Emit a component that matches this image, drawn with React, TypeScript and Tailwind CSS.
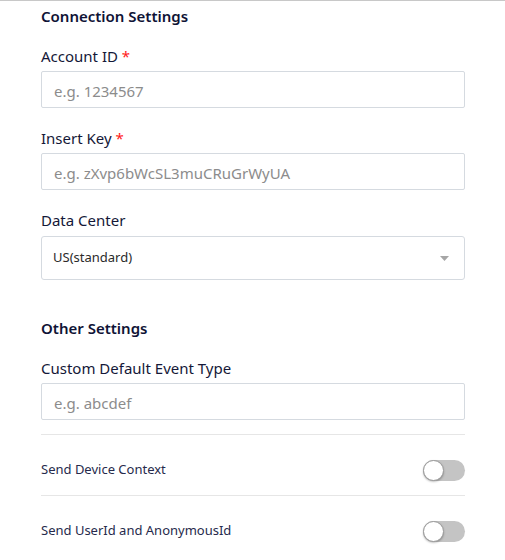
import React from "react";

function Label({ text, required }: { text: string; required?: boolean }) {
  return (
    <div className="text-[15px] leading-[22px] text-[#141838]">
      {text}
      {required && <span className="text-[#ff1a1a]"> *</span>}
    </div>
  );
}

function TextInput({ placeholder }: { placeholder: string }) {
  return (
    <input
      className="block w-full h-[37px] border border-[#d5dae0] rounded-[2px] px-[12px] pt-[2px] text-[15px] text-[#333] placeholder:text-[#8c8c8c] outline-none bg-white"
      style={{ fontFamily: "inherit" }}
      placeholder={placeholder}
    />
  );
}

function Toggle() {
  return (
    <div className="relative w-[42px] h-[21px] rounded-full bg-[#c4c4c4]">
      <div className="absolute left-0 top-0 w-[21px] h-[21px] rounded-full bg-white border border-[#9a9a9a] shadow-[0_1px_2px_rgba(0,0,0,0.25)]" />
    </div>
  );
}

export default function App() {
  return (
    <div
      className="w-[505px] h-[560px] bg-white border-t border-[#c8c8c8] overflow-hidden"
      style={{ fontFamily: '"Noto Sans", "Open Sans", sans-serif' }}
    >
      <div className="ml-[41px] w-[424px] flex flex-col">
        <div className="mt-[4px] text-[15px] leading-[22px] font-semibold text-[#0f1336]">
          Connection Settings
        </div>

        <div className="mt-[18px]">
          <Label text="Account ID" required />
        </div>
        <div className="mt-[4px]">
          <TextInput placeholder="e.g. 1234567" />
        </div>

        <div className="mt-[19px]">
          <Label text="Insert Key" required />
        </div>
        <div className="mt-[4px]">
          <TextInput placeholder="e.g. zXvp6bWcSL3muCRuGrWyUA" />
        </div>

        <div className="mt-[19px]">
          <Label text="Data Center" />
        </div>
        <div className="mt-[5px] h-[44px] border border-[#d5dae0] rounded-[3px] flex items-center justify-between pl-[11px] pr-[15px]">
          <span className="text-[13px] text-[#2a2a2a]">US(standard)</span>
          <svg width="9" height="5" viewBox="0 0 9 5">
            <path d="M0 0 L9 0 L4.5 5 Z" fill="#a6a6a6" />
          </svg>
        </div>

        <div className="mt-[37px] text-[15px] leading-[22px] font-semibold text-[#0f1336]">
          Other Settings
        </div>

        <div className="mt-[18px]">
          <Label text="Custom Default Event Type" />
        </div>
        <div className="mt-[4px]">
          <TextInput placeholder="e.g. abcdef" />
        </div>

        <div className="mt-[14px] h-px bg-[#e6e6e6]" />
        <div className="h-[60px] flex items-center justify-between pt-[10px]">
          <span className="text-[13px] text-[#262a4c]">Send Device Context</span>
          <Toggle />
        </div>
        <div className="h-px bg-[#e6e6e6]" />
        <div className="h-[60px] flex items-center justify-between pt-[10px]">
          <span className="text-[13px] text-[#262a4c]">Send UserId and AnonymousId</span>
          <Toggle />
        </div>
      </div>
    </div>
  );
}
